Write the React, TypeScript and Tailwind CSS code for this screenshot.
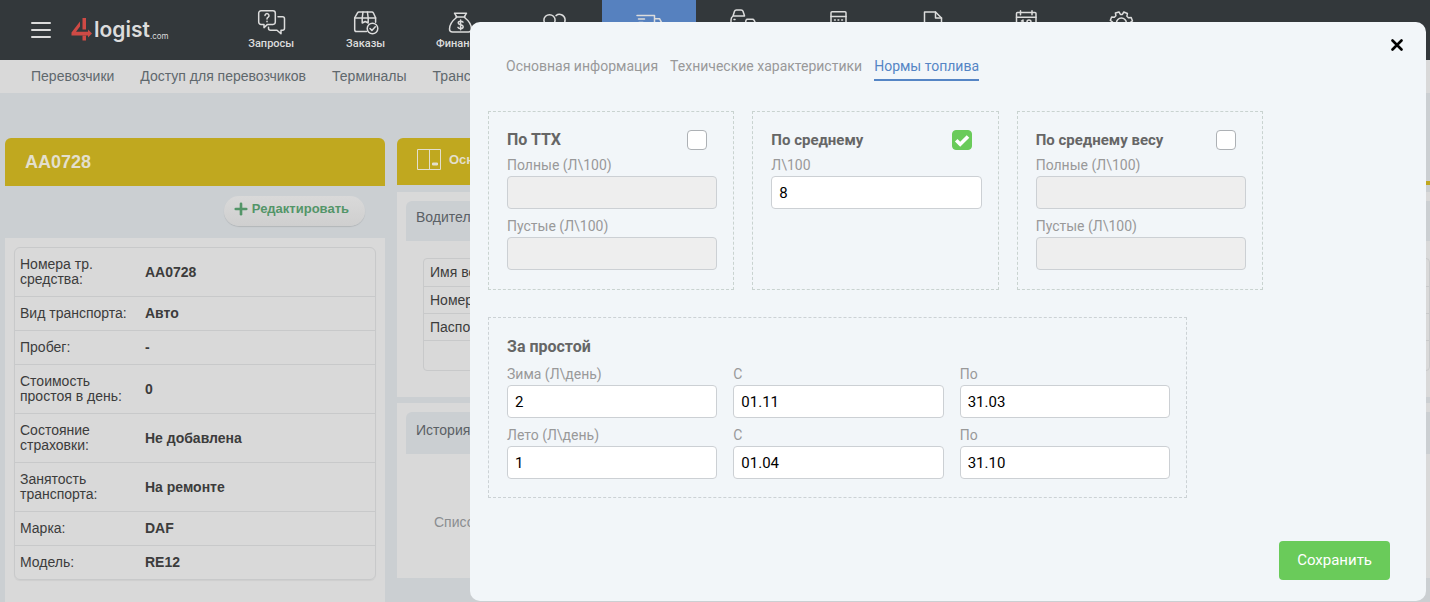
import { useState, type ReactNode } from "react";
import { Plus } from "lucide-react";

interface NavItem {
  label: string;
  icon: ReactNode;
  active?: boolean;
}

const navItems: NavItem[] = [
  {
    label: "Запросы",
    icon: (
      <>
        <path d="M5 2.8h12a2.3 2.3 0 0 1 2.3 2.3v9a2.3 2.3 0 0 1-2.3 2.3h-5.5L8 19.6v-3.2H5a2.3 2.3 0 0 1-2.3-2.3v-9A2.3 2.3 0 0 1 5 2.8z" />
        <path d="M22 8.7h4.5a2 2 0 0 1 2 2v9.5a2 2 0 0 1-2 2H25v3.600l-4-3.600h-6.500a2 2 0 0 1-2-2v-1" />
        <path d="M9 7.500a2 2 0 1 1 3.200 1.700c-.8.5-1.200.8-1.200 1.800" />
        <path d="M11 13.200v.5" />
      </>
    )
  },
  {
    label: "Заказы",
    icon: (
      <>
        <path d="M15.500 23.500H5.500A1.800 1.800 0 0 1 3.700 21.700V9.800L6.500 4.800a1.600 1.600 0 0 1 1.400-.8h13a1.600 1.600 0 0 1 1.400.8l2.300 5v4.500" />
        <path d="M3.700 10h20.900M12 4l-.8 6v5l3-1.500 3 1.500v-5l-.8-6" />
        <circle cx="21.500" cy="20.500" r="5.300" />
        <path d="m19 20.500 1.900 1.900 3.400-3.600" />
      </>
    )
  },
  {
    label: "Финансы",
    icon: (
      <>
        <path d="M11.500 8.500 9.500 5.200h12l-2 3.300M11 9h9" />
        <path d="M11.500 9.500C7 13 4.500 17 4.500 21a3 3 0 0 0 3 3h16a3 3 0 0 0 3-3c0-4-2.500-8-7-11.500" />
        <path d="M18 14.200c-.5-.8-1.400-1-2.400-1-1.300 0-2.400.6-2.400 1.800 0 2.500 5 1.200 5 3.700 0 1.200-1.200 1.800-2.600 1.800-1.100 0-2.100-.4-2.600-1.200M15.600 12v9.700" />
      </>
    )
  },
  {
    label: "Клиенты",
    icon: (
      <>
        <circle cx="10.500" cy="12.300" r="5.600" />
        <path d="M17 7.600a5.600 5.600 0 1 1 1.500 9.600M2 25c0-5 3.500-7 8-7s8 2 8 7M21 18c4 .3 7 3 7 7" />
      </>
    )
  },
  {
    label: "Транспорт",
    active: true,
    icon: (
      <>
        <path d="M3 7.500h17.500v14h-6M4.500 11h6M5 14.500h4M20.500 10.700h5l3.200 6v5h-2" />
        <circle cx="10" cy="22" r="2.500" />
        <circle cx="22.500" cy="22" r="2.500" />
      </>
    )
  },
  {
    label: "Автопарк",
    icon: (
      <>
        <path d="M5 8 6.500 3.300A2 2 0 0 1 8.400 1.900h4.700A2 2 0 0 1 15 3.300l1.500 4.500M5 8h11.500M5 8c-1.500 1-2 2-2 4v8h8M6 11.500h1" />
        <path d="M17.500 15 18 12.200a1.500 1.500 0 0 1 1.400-.9h5.200a1.500 1.500 0 0 1 1.400.9l1.500 2.800v8h-10z" />
      </>
    )
  },
  {
    label: "Расчеты",
    icon: (
      <>
        <rect x="8" y="3.800" width="15" height="21" rx="1" />
        <path d="M8 8.500h15M11.500 12h.8M15 12h.8M18.700 12h.8M11.500 16h.8M15 16h.8M18.700 16h.8" />
      </>
    )
  },
  {
    label: "Документы",
    icon: (
      <>
        <path d="M18.500 4h-11v20.500h17V10z" />
        <path d="M18.500 4v6h6M11 15h10M11 19h10" />
      </>
    )
  },
  {
    label: "Календарь",
    icon: (
      <>
        <rect x="5.500" y="4.500" width="19.500" height="20" rx="1" />
        <path d="M5.500 9.300H25M9.500 2.800v4M21 2.800v4M10.500 13l1.500-1v7" />
        <circle cx="18" cy="14" r="2" />
        <circle cx="18" cy="18" r="2" />
      </>
    )
  },
  {
    label: "Настройки",
    icon: (
      <>
        <path d="m13 4 1.400 2.400h2L17.800 4l3.600 1.500-.5 2.700 1.500 1.500 2.800-.3 1.300 3.500-2.300 1.600v2l2.300 1.600-1.300 3.500-2.800-.3-1.500 1.500.5 2.700-3.600 1.500-1.400-2.400h-2L13 26.500 9.400 25l.5-2.700-1.500-1.500-2.800.3-1.300-3.500 2.300-1.600v-2l-2.300-1.600 1.300-3.500 2.800.3 1.500-1.500-.5-2.700z" />
        <circle cx="15.400" cy="15" r="5" />
      </>
    )
  }
];

const subNav = ["Перевозчики", "Доступ для перевозчиков", "Терминалы", "Транспорт"];

const details = [
  ["Номера тр. средства:", "AA0728"],
  ["Вид транспорта:", "Авто"],
  ["Пробег:", "-"],
  ["Стоимость простоя в день:", "0"],
  ["Состояние страховки:", "Не добавлена"],
  ["Занятость транспорта:", "На ремонте"],
  ["Марка:", "DAF"],
  ["Модель:", "RE12"]
];

const tabs = ["Основная информация", "Технические характеристики", "Нормы топлива"];

const idleFields = [
  { id: "winter", label: "Зима (Л\\день)", value: "2" },
  { id: "winter-from", label: "С", value: "01.11" },
  { id: "winter-to", label: "По", value: "31.03" },
  { id: "summer", label: "Лето (Л\\день)", value: "1" },
  { id: "summer-from", label: "С", value: "01.04" },
  { id: "summer-to", label: "По", value: "31.10" }
];

function Logo() {
  return (
    <a href="#" className="flex items-center text-[#dcdcdc]">
      <svg viewBox="0 0 22 24" className="h-6 w-[22px]" fill="#cf4a45">
        <path d="M9 3.500v5L5 13.700h12V11.500l4 4-4 4v-2H.5v-3z" />
        <path d="M11.500 0h3.500v11.500h-3.500zM11.500 17.500h3.500v5h-3.500z" />
      </svg>
      <span className="pl-px font-[Inter,sans-serif] text-[21px] leading-6 font-semibold">
        logist
      </span>
      <span className="pt-3 font-[Inter,sans-serif] text-[8px] leading-3">.com</span>
    </a>
  );
}

function Header() {
  return (
    <header className="flex h-[60px] bg-[#33383b]">
      <div className="flex w-56 shrink-0 items-center gap-5 pl-[31px]">
        <button type="button" aria-label="Меню" className="flex w-5 flex-col gap-[5px]">
          <span className="h-0.5 rounded bg-[#dcdcdc]" />
          <span className="h-0.5 rounded bg-[#dcdcdc]" />
          <span className="h-0.5 rounded bg-[#dcdcdc]" />
        </button>
        <Logo />
      </div>
      <nav className="flex w-[944px] shrink-0">
        {navItems.map((item) => (
          <a
            key={item.label}
            href="#"
            className={`flex flex-1 flex-col items-center pt-2 text-[#dcdcdc] ${
              item.active ? "bg-[#5681bf]" : ""
            }`}
          >
            <svg
              viewBox="0 0 30 28"
              className="h-7 w-[30px]"
              fill="none"
              stroke="currentColor"
              strokeWidth="1.5"
              strokeLinecap="round"
              strokeLinejoin="round"
            >
              {item.icon}
            </svg>
            <span className="font-[Roboto,sans-serif] text-[11px] leading-4 font-medium">
              {item.label}
            </span>
          </a>
        ))}
      </nav>
    </header>
  );
}

function VehicleCard() {
  return (
    <section className="flex w-[380px] shrink-0 flex-col">
      <h1 className="rounded-t-md bg-[#c0a81f] px-5 text-lg leading-[48px] font-bold text-[#e3dfcd]">
        AA0728
      </h1>
      <div className="flex justify-end px-5 pt-2.5 pb-3">
        <button
          type="button"
          className="flex h-[30px] items-center gap-0.5 rounded-full bg-linear-to-b from-[#d9d9d9] to-[#cfcfcf] pr-4 pb-1 pl-2 text-[13px] font-bold text-[#539568] shadow-[0_1px_1px_rgba(0,0,0,0.12)]"
        >
          <Plus size={18} strokeWidth={3.5} />
          Редактировать
        </button>
      </div>
      <div className="grow bg-[#d9d9d9] px-[9px] pt-[9px] pb-5">
        <div className="overflow-hidden rounded-md border border-[#c8c9ca] shadow-[0_1px_1px_rgba(0,0,0,0.05)]">
          <table className="w-full text-left text-sm leading-[15px] text-[#3c3c3c]">
            <tbody>
              {details.map(([label, value]) => (
                <tr key={label} className="border-b border-[#c8c9ca] last:border-b-0">
                  <th scope="row" className="w-[125px] py-[9px] pl-[5px] font-normal">
                    {label}
                  </th>
                  <td className="py-[9px] pl-[5px] font-bold">{value}</td>
                </tr>
              ))}
            </tbody>
          </table>
        </div>
      </div>
    </section>
  );
}

function DetailsColumn() {
  return (
    <section className="min-w-0 grow">
      <div className="border-b-4 border-[#c0a81f]">
        <button
          type="button"
          className="flex h-[43px] w-[230px] items-center gap-2 rounded-t-md bg-[#c0a81f] pl-5 text-[13px] font-bold text-[#e3dfcd]"
        >
          <svg viewBox="0 0 24 21" className="h-[21px] w-6" fill="none" stroke="currentColor">
            <path d="M.5.5h23v20H.5zM12.500.5v20" />
            <path d="M15.500 14h5v2h-5z" fill="currentColor" />
          </svg>
          Основная
        </button>
      </div>
      <div className="mt-[7px] bg-[#d9d9d9] pt-[9px] pb-[26px] pl-[9px]">
        <h2 className="rounded-tl-md bg-[#cbcfd2] pt-2 pb-4 pl-2.5 text-sm leading-4 text-[#5a6065]">
          Водители
        </h2>
        <div className="mt-[17px] ml-[17px] rounded border border-[#c8c9ca]">
          <table className="w-full text-left text-sm text-[#3c3c3c]">
            <tbody>
              {["Имя водителя", "Номер телефона", "Паспорт"].map((row) => (
                <tr key={row} className="h-[27px] border-b border-[#c8c9ca]">
                  <th scope="row" className="pl-1.5 font-normal">
                    {row}
                  </th>
                </tr>
              ))}
              <tr className="h-[30px]">
                <td />
              </tr>
            </tbody>
          </table>
        </div>
      </div>
      <div className="mt-1.5 bg-[#d9d9d9] pt-[9px] pb-12 pl-[9px]">
        <h2 className="rounded-tl-md bg-[#cbcfd2] pt-2.5 pb-4 pl-2.5 text-sm leading-4 text-[#5a6065]">
          История
        </h2>
        <p className="mt-[60px] pl-7 text-sm leading-4 text-[#8a8d90]">Список пуст</p>
      </div>
    </section>
  );
}

interface FieldProps {
  id: string;
  label: string;
  value?: string;
  disabled?: boolean;
}

function Field({ id, label, value = "", disabled }: FieldProps) {
  return (
    <div className="flex flex-col gap-px">
      <label htmlFor={id} className="text-sm leading-5 text-[#999]">
        {label}
      </label>
      <input
        id={id}
        type="text"
        defaultValue={value}
        disabled={disabled}
        className="h-[33px] w-full rounded border border-[#ccd0d4] bg-white px-[7px] text-[15px] text-black disabled:bg-[#eee]"
      />
    </div>
  );
}

interface NormPanelProps {
  id: string;
  title: string;
  large?: boolean;
  checked?: boolean;
  children: ReactNode;
}

function NormPanel({ id, title, large, checked = false, children }: NormPanelProps) {
  const [isChecked, setIsChecked] = useState(checked);

  return (
    <div className="border border-dashed border-[#c9d3d0] pt-[18px] pr-4 pb-[19px] pl-[18px]">
      <div className="flex items-center justify-between pr-2.5">
        <label
          htmlFor={id}
          className={`leading-5 font-bold text-[#666] ${large ? "text-base" : "text-[15px]"}`}
        >
          {title}
        </label>
        <span className="grid size-5">
          <input
            id={id}
            type="checkbox"
            checked={isChecked}
            onChange={(e) => setIsChecked(e.target.checked)}
            className="col-start-1 row-start-1 size-5 appearance-none rounded border border-[#adb1b5] bg-white checked:border-[#6acb5a] checked:bg-[#6acb5a]"
          />
          {isChecked && (
            <svg
              viewBox="0 0 20 20"
              className="pointer-events-none col-start-1 row-start-1 size-5"
              fill="none"
              stroke="white"
              strokeWidth="3.6"
            >
              <path d="m4.200 10.300 4 4 7.800-7.800" />
            </svg>
          )}
        </span>
      </div>
      <div className="mt-[5px] flex flex-col gap-[7px]">{children}</div>
    </div>
  );
}

function FuelDialog() {
  const [tab, setTab] = useState("Нормы топлива");

  return (
    <div
      role="dialog"
      aria-label="Нормы топлива"
      className="absolute top-[22px] right-1 left-[470px] rounded-[10px] bg-[#f2f6f9] px-[18px] pt-[34px] pb-[21px] font-[Roboto,sans-serif]"
    >
      <button type="button" aria-label="Закрыть" className="absolute top-[17px] right-[23px]">
        <svg viewBox="0 0 12 12" className="size-3" stroke="black" strokeWidth="2.600" strokeLinecap="round">
          <path d="m1.500 1.500 9 9M10.500 1.500l-9 9" />
        </svg>
      </button>

      <div role="tablist" className="flex gap-3 pl-[18px]">
        {tabs.map((name) => (
          <button
            key={name}
            type="button"
            role="tab"
            aria-selected={tab === name}
            onClick={() => setTab(name)}
            className={`border-b-2 pb-[3px] text-sm leading-5 ${
              tab === name ? "border-[#5585c5] text-[#5585c5]" : "border-transparent text-[#999]"
            }`}
          >
            {name}
          </button>
        ))}
      </div>

      <div className="mt-[30px] grid max-w-[775px] grid-cols-3 gap-[18px]">
        <NormPanel id="by-ttx" title="По ТТХ" large>
          <Field id="ttx-full" label="Полные (Л\100)" disabled />
          <Field id="ttx-empty" label="Пустые (Л\100)" disabled />
        </NormPanel>
        <NormPanel id="by-average" title="По среднему" checked>
          <Field id="average" label="Л\100" value="8" />
        </NormPanel>
        <NormPanel id="by-weight" title="По среднему весу">
          <Field id="weight-full" label="Полные (Л\100)" disabled />
          <Field id="weight-empty" label="Пустые (Л\100)" disabled />
        </NormPanel>
      </div>

      <div className="mt-[27px] max-w-[699px] border border-dashed border-[#ccd2d5] pt-[19px] pr-4 pb-[18px] pl-[18px]">
        <h2 className="text-base leading-5 font-bold text-[#666]">За простой</h2>
        <div className="mt-[7px] grid grid-cols-3 gap-x-4 gap-y-[7px]">
          {idleFields.map((field) => (
            <Field key={field.id} {...field} />
          ))}
        </div>
      </div>

      <div className="mt-[43px] flex justify-end pr-[18px]">
        <button
          type="button"
          className="h-[39px] rounded bg-[#6acb5a] px-[18px] text-[15px] text-white"
        >
          Сохранить
        </button>
      </div>
    </div>
  );
}

export default function App() {
  return (
    <div className="relative flex min-h-screen flex-col overflow-hidden bg-[#cbcfd2] font-['Liberation_Sans',Arial,sans-serif]">
      <Header />
      <nav className="flex gap-[26px] bg-[#d9d9d9] pl-[31px] text-sm leading-[33px] text-[#5f686d]">
        {subNav.map((item) => (
          <a key={item} href="#" className="whitespace-nowrap">
            {item}
          </a>
        ))}
      </nav>
      <main className="flex grow gap-3 pt-[45px] pl-[5px]">
        <VehicleCard />
        <DetailsColumn />
      </main>
      <FuelDialog />
    </div>
  );
}
